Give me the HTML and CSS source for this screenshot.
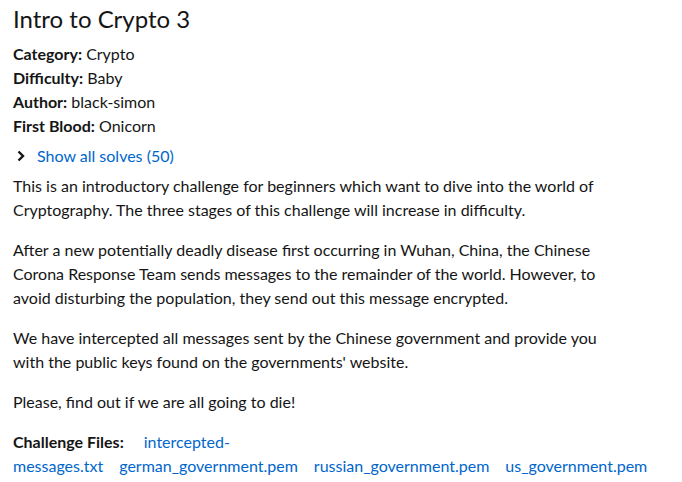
FILE: index.html
```html
<!DOCTYPE html>
<html lang="en">
<head>
<meta charset="utf-8">
<title>Intro to Crypto 3</title>
<link rel="stylesheet" href="styles.css">
</head>
<body>
<main class="challenge">
  <h1 class="title">Intro to Crypto 3</h1>
  <div class="meta">
    <div><b>Category:</b> Crypto</div>
    <div><b>Difficulty:</b> Baby</div>
    <div><b>Author:</b> black-simon</div>
    <div><b>First Blood:</b> Onicorn</div>
  </div>
  <div class="solves">
    <svg class="chevron" viewBox="0 0 8 12" width="8" height="12" aria-hidden="true"><path d="M1.5 1.5 L6 6 L1.5 10.5" fill="none" stroke="#151515" stroke-width="2.4" stroke-linejoin="miter"/></svg>
    <a href="#" class="link">Show all solves (50)</a>
  </div>
  <div class="description">
    <p>This is an introductory challenge for beginners which want to dive into the world of<br>Cryptography. The three stages of this challenge will increase in difficulty.</p>
    <p>After a new potentially deadly disease first occurring in Wuhan, China, the Chinese<br>Corona Response Team sends messages to the remainder of the world. However, to<br>avoid disturbing the population, they send out this message encrypted.</p>
    <p>We have intercepted all messages sent by the Chinese government and provide you<br>with the public keys found on the governments' website.</p>
    <p>Please, find out if we are all going to die!</p>
  </div>
  <div class="files"><b class="files-label">Challenge Files:</b><a href="#" class="link file">intercepted-messages.txt</a><a href="#" class="link file">german_government.pem</a><a href="#" class="link file">russian_government.pem</a><a href="#" class="link file">us_government.pem</a></div>
</main>
</body>
</html>
```
FILE: styles.css
```css
html, body {
  margin: 0;
  padding: 0;
  background: #ffffff;
}
body {
  font-family: "Lato", "Liberation Sans", sans-serif;
  font-size: 16px;
  line-height: 24px;
  color: #151515;
}
.challenge {
  padding: 4px 13px 0 13px;
}
.title {
  margin: 0 0 9px 0;
  font-size: 24px;
  line-height: 29px;
  font-weight: 400;
}
.meta b, .files b {
  font-weight: 700;
}
.solves {
  margin-top: 6px;
  display: flex;
  align-items: center;
  gap: 12px;
  padding-left: 4px;
}
.chevron {
  display: block;
}
.link {
  color: #0066cc;
  text-decoration: none;
}
.description {
  margin-top: 6px;
}
.description p {
  margin: 0 0 16px 0;
}
.files {
  margin-top: 15px;
}
.files-label {
  margin-right: 4px;
}
.file {
  margin-left: 16px;
}
```
